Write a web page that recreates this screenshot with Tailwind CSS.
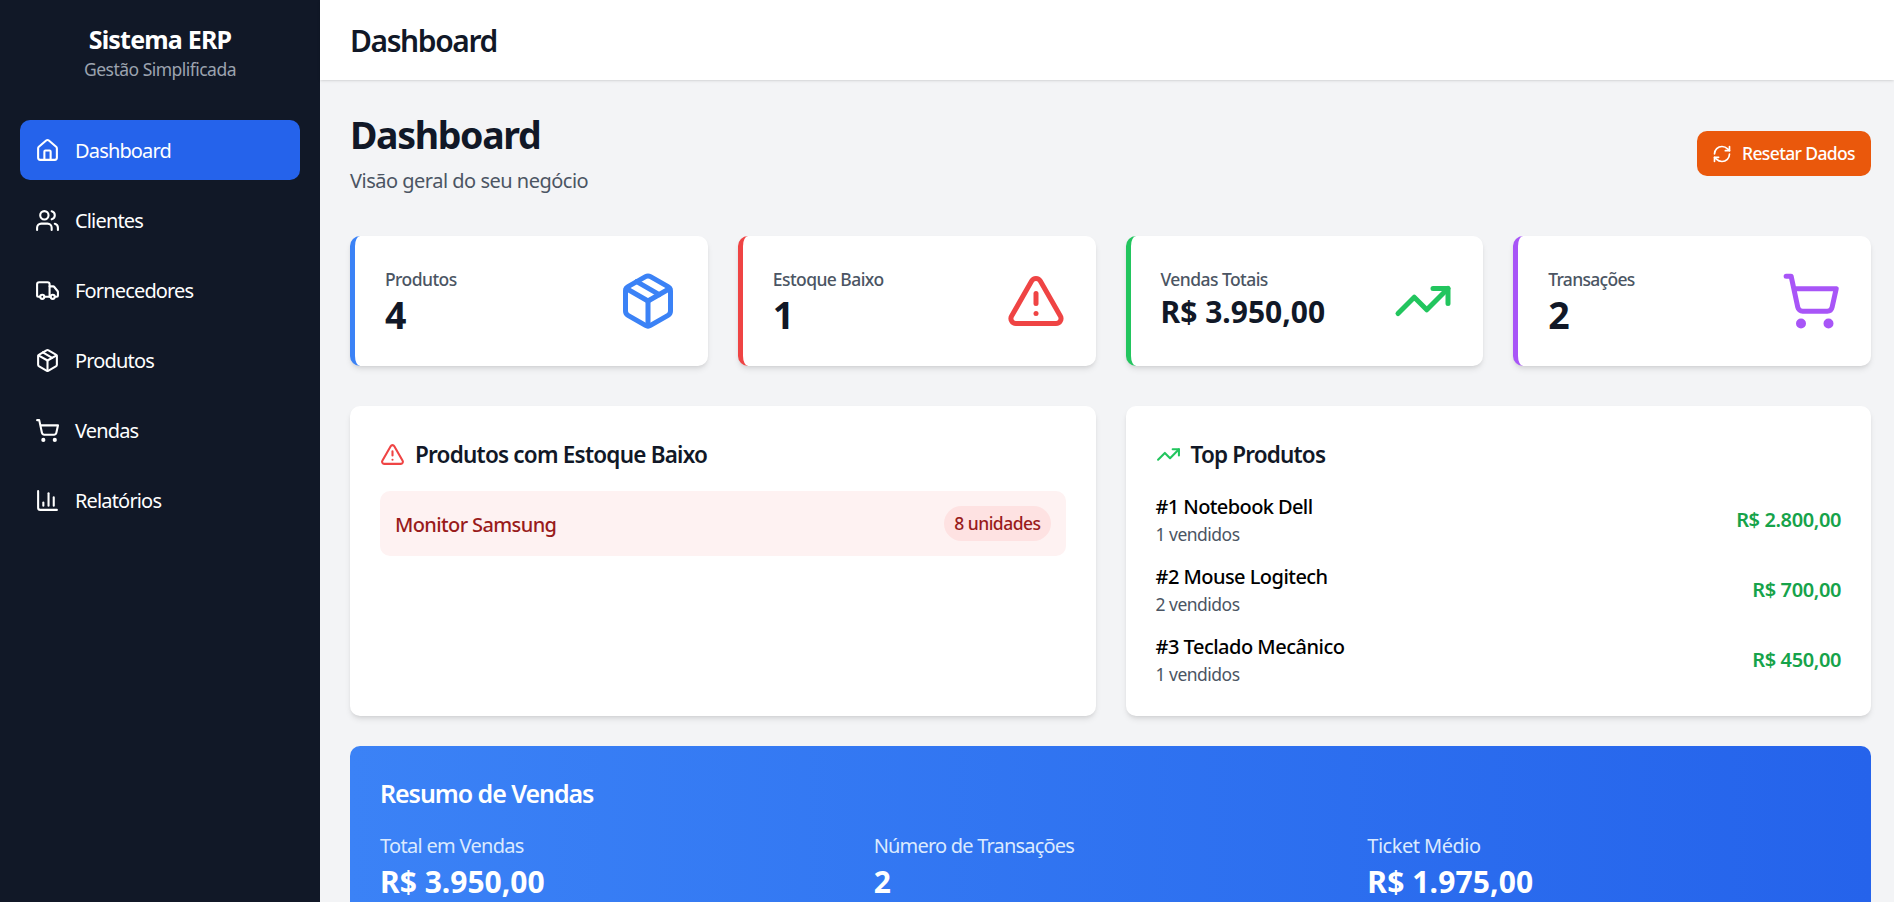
<!DOCTYPE html>
<html lang="pt-BR">
  <head>
    <meta charset="UTF-8" />
    <title>Sistema ERP</title>
    <script src="https://cdn.jsdelivr.net/npm/@tailwindcss/browser@4"></script>
  </head>
  <body class="h-screen overflow-hidden bg-[#f3f4f6] font-['Noto_Sans',sans-serif]">
    <div class="flex h-full">
      <!-- Sidebar -->
      <aside class="w-[320px] shrink-0 bg-[#111827] text-white">
        <div class="pt-[22px] text-center">
          <h1 class="text-[25px] leading-[35px] font-bold tracking-[-0.032em]">Sistema ERP</h1>
          <p class="text-[17.5px] leading-[25px] tracking-[-0.03em] text-[#9ca3af]">Gestão Simplificada</p>
        </div>
        <nav class="mt-[38px] flex flex-col gap-[10px] px-5 text-[20px] leading-[30px] tracking-[-0.042em]">
          <a class="flex h-[60px] items-center gap-[15px] rounded-[10px] bg-[#2563eb] px-[15px]">
            <svg class="h-[25px] w-[25px]" viewBox="0 0 24 24" fill="none" stroke="currentColor" stroke-width="2" stroke-linecap="round" stroke-linejoin="round"><path d="M15 21v-8a1 1 0 0 0-1-1h-4a1 1 0 0 0-1 1v8" /><path d="M3 10a2 2 0 0 1 .709-1.528l7-5.999a2 2 0 0 1 2.582 0l7 5.999A2 2 0 0 1 21 10v9a2 2 0 0 1-2 2H5a2 2 0 0 1-2-2z" /></svg>
            <span class="pt-[2px]">Dashboard</span>
          </a>
          <a class="flex h-[60px] items-center gap-[15px] rounded-[10px] px-[15px]">
            <svg class="h-[25px] w-[25px]" viewBox="0 0 24 24" fill="none" stroke="currentColor" stroke-width="2" stroke-linecap="round" stroke-linejoin="round"><path d="M16 21v-2a4 4 0 0 0-4-4H6a4 4 0 0 0-4 4v2" /><circle cx="9" cy="7" r="4" /><path d="M22 21v-2a4 4 0 0 0-3-3.87" /><path d="M16 3.13a4 4 0 0 1 0 7.75" /></svg>
            <span class="pt-[2px]">Clientes</span>
          </a>
          <a class="flex h-[60px] items-center gap-[15px] rounded-[10px] px-[15px]">
            <svg class="h-[25px] w-[25px]" viewBox="0 0 24 24" fill="none" stroke="currentColor" stroke-width="2" stroke-linecap="round" stroke-linejoin="round"><path d="M14 18V6a2 2 0 0 0-2-2H4a2 2 0 0 0-2 2v11a1 1 0 0 0 1 1h2" /><path d="M15 18H9" /><path d="M19 18h2a1 1 0 0 0 1-1v-3.65a1 1 0 0 0-.22-.624l-3.48-4.35A1 1 0 0 0 17.52 8H14" /><circle cx="17" cy="18" r="2" /><circle cx="7" cy="18" r="2" /></svg>
            <span class="pt-[2px]">Fornecedores</span>
          </a>
          <a class="flex h-[60px] items-center gap-[15px] rounded-[10px] px-[15px]">
            <svg class="h-[25px] w-[25px]" viewBox="0 0 24 24" fill="none" stroke="currentColor" stroke-width="2" stroke-linecap="round" stroke-linejoin="round"><path d="M11 21.73a2 2 0 0 0 2 0l7-4A2 2 0 0 0 21 16V8a2 2 0 0 0-1-1.73l-7-4a2 2 0 0 0-2 0l-7 4A2 2 0 0 0 3 8v8a2 2 0 0 0 1 1.73z" /><path d="M12 22V12" /><path d="M3.3 7 12 12l8.7-5" /><path d="m7.5 4.27 9 5.15" /></svg>
            <span class="pt-[2px]">Produtos</span>
          </a>
          <a class="flex h-[60px] items-center gap-[15px] rounded-[10px] px-[15px]">
            <svg class="h-[25px] w-[25px]" viewBox="0 0 24 24" fill="none" stroke="currentColor" stroke-width="2" stroke-linecap="round" stroke-linejoin="round"><circle cx="8" cy="21" r="1" /><circle cx="19" cy="21" r="1" /><path d="M2.05 2.05h2l2.66 12.42a2 2 0 0 0 2 1.58h9.78a2 2 0 0 0 1.95-1.57l1.65-7.43H5.12" /></svg>
            <span class="pt-[2px]">Vendas</span>
          </a>
          <a class="flex h-[60px] items-center gap-[15px] rounded-[10px] px-[15px]">
            <svg class="h-[25px] w-[25px]" viewBox="0 0 24 24" fill="none" stroke="currentColor" stroke-width="2" stroke-linecap="round" stroke-linejoin="round"><path d="M3 3v16a2 2 0 0 0 2 2h16" /><path d="M18 17V9" /><path d="M13 17V5" /><path d="M8 17v-3" /></svg>
            <span class="pt-[2px]">Relatórios</span>
          </a>
        </nav>
      </aside>

      <div class="flex min-w-0 flex-1 flex-col">
        <!-- Header -->
        <header class="h-[80px] shrink-0 bg-white px-[30px] shadow-sm">
          <h2 class="text-[30px] leading-[82px] font-semibold tracking-[-0.047em] text-[#111827]">Dashboard</h2>
        </header>

        <!-- Content -->
        <main class="flex-1 overflow-hidden pt-[31px] pr-[23px] pl-[30px]">
          <div class="mb-[40px] flex items-center justify-between">
            <div>
              <h1 class="text-[37.5px] leading-[47px] font-bold tracking-[-0.036em] text-[#111827]">Dashboard</h1>
              <p class="mt-[8px] text-[20px] leading-[30px] tracking-[-0.025em] text-[#4b5563]">Visão geral do seu negócio</p>
            </div>
            <button class="flex h-[45px] items-center gap-[10px] rounded-[10px] bg-[#ea580c] pr-[16px] pl-[15px] text-[17.5px] font-medium tracking-[-0.036em] text-white">
              <svg class="h-[20px] w-[20px]" viewBox="0 0 24 24" fill="none" stroke="currentColor" stroke-width="2" stroke-linecap="round" stroke-linejoin="round"><path d="M3 12a9 9 0 0 1 9-9 9.75 9.75 0 0 1 6.74 2.74L21 8" /><path d="M21 3v5h-5" /><path d="M21 12a9 9 0 0 1-9 9 9.75 9.75 0 0 1-6.74-2.74L3 16" /><path d="M8 16H3v5" /></svg>
              Resetar Dados
            </button>
          </div>

          <!-- Stat cards -->
          <div class="mb-[40px] grid grid-cols-4 gap-[30px]">
            <div class="flex h-[130px] justify-between rounded-[10px] border-l-[5px] border-[#3b82f6] bg-white px-[30px] pt-[31px] pb-[31px] shadow-md">
              <div>
                <p class="text-[17.5px] leading-[25px] font-medium tracking-[-0.032em] text-[#4b5563]">Produtos</p>
                <p class="text-[37.5px] leading-[45px] font-bold text-[#111827]">4</p>
              </div>
              <svg class="h-[60px] w-[60px] self-center text-[#3b82f6]" viewBox="0 0 24 24" fill="none" stroke="currentColor" stroke-width="2" stroke-linecap="round" stroke-linejoin="round"><path d="M11 21.73a2 2 0 0 0 2 0l7-4A2 2 0 0 0 21 16V8a2 2 0 0 0-1-1.73l-7-4a2 2 0 0 0-2 0l-7 4A2 2 0 0 0 3 8v8a2 2 0 0 0 1 1.73z" /><path d="M12 22V12" /><path d="M3.3 7 12 12l8.7-5" /><path d="m7.5 4.27 9 5.15" /></svg>
            </div>
            <div class="flex h-[130px] justify-between rounded-[10px] border-l-[5px] border-[#ef4444] bg-white px-[30px] pt-[31px] pb-[31px] shadow-md">
              <div>
                <p class="text-[17.5px] leading-[25px] font-medium tracking-[-0.032em] text-[#4b5563]">Estoque Baixo</p>
                <p class="text-[37.5px] leading-[45px] font-bold text-[#111827]">1</p>
              </div>
              <svg class="h-[60px] w-[60px] self-center text-[#ef4444]" viewBox="0 0 24 24" fill="none" stroke="currentColor" stroke-width="2" stroke-linecap="round" stroke-linejoin="round"><path d="m21.73 18-8-14a2 2 0 0 0-3.48 0l-8 14A2 2 0 0 0 4 21h16a2 2 0 0 0 1.73-3" /><path d="M12 9v4" /><path d="M12 17h.01" /></svg>
            </div>
            <div class="flex h-[130px] justify-between rounded-[10px] border-l-[5px] border-[#22c55e] bg-white px-[30px] pt-[31px] pb-[31px] shadow-md">
              <div>
                <p class="text-[17.5px] leading-[25px] font-medium tracking-[-0.032em] text-[#4b5563]">Vendas Totais</p>
                <p class="text-[30px] leading-[40px] font-bold text-[#111827]">R$ 3.950,00</p>
              </div>
              <svg class="h-[60px] w-[60px] self-center text-[#22c55e]" viewBox="0 0 24 24" fill="none" stroke="currentColor" stroke-width="2" stroke-linecap="round" stroke-linejoin="round"><polyline points="22 7 13.5 15.5 8.5 10.5 2 17" /><polyline points="16 7 22 7 22 13" /></svg>
            </div>
            <div class="flex h-[130px] justify-between rounded-[10px] border-l-[5px] border-[#a855f7] bg-white px-[30px] pt-[31px] pb-[31px] shadow-md">
              <div>
                <p class="text-[17.5px] leading-[25px] font-medium tracking-[-0.04em] text-[#4b5563]">Transações</p>
                <p class="text-[37.5px] leading-[45px] font-bold text-[#111827]">2</p>
              </div>
              <svg class="h-[60px] w-[60px] self-center text-[#a855f7]" viewBox="0 0 24 24" fill="none" stroke="currentColor" stroke-width="2" stroke-linecap="round" stroke-linejoin="round"><circle cx="8" cy="21" r="1" /><circle cx="19" cy="21" r="1" /><path d="M2.05 2.05h2l2.66 12.42a2 2 0 0 0 2 1.58h9.78a2 2 0 0 0 1.95-1.57l1.65-7.43H5.12" /></svg>
            </div>
          </div>

          <!-- Panels -->
          <div class="mb-[30px] grid grid-cols-2 gap-[30px]">
            <div class="h-[310px] rounded-[10px] bg-white px-[30px] pt-[31px] shadow-md">
              <h3 class="mb-[19px] flex items-center gap-[10px] text-[22.5px] leading-[35px] font-semibold tracking-[-0.035em] text-[#111827]">
                <svg class="h-[25px] w-[25px] text-[#ef4444]" viewBox="0 0 24 24" fill="none" stroke="currentColor" stroke-width="2" stroke-linecap="round" stroke-linejoin="round"><path d="m21.73 18-8-14a2 2 0 0 0-3.48 0l-8 14A2 2 0 0 0 4 21h16a2 2 0 0 0 1.73-3" /><path d="M12 9v4" /><path d="M12 17h.01" /></svg>
                Produtos com Estoque Baixo
              </h3>
              <div class="flex items-center justify-between rounded-[10px] bg-[#fef2f2] p-[15px]">
                <span class="pt-[2px] text-[20px] leading-[30px] font-medium tracking-[-0.031em] text-[#991b1b]">Monitor Samsung</span>
                <span class="rounded-full bg-[#fee2e2] px-[10px] py-[5px] text-[17.5px] leading-[25px] font-medium tracking-[-0.03em] text-[#991b1b]">8 unidades</span>
              </div>
            </div>
            <div class="h-[310px] rounded-[10px] bg-white px-[30px] pt-[31px] shadow-md">
              <h3 class="mb-[20px] flex items-center gap-[10px] text-[22.5px] leading-[35px] font-semibold tracking-[-0.037em] text-[#111827]">
                <svg class="h-[25px] w-[25px] text-[#22c55e]" viewBox="0 0 24 24" fill="none" stroke="currentColor" stroke-width="2" stroke-linecap="round" stroke-linejoin="round"><polyline points="22 7 13.5 15.5 8.5 10.5 2 17" /><polyline points="16 7 22 7 22 13" /></svg>
                Top Produtos
              </h3>
              <div class="flex flex-col gap-[15px]">
                <div class="flex items-center justify-between">
                  <div>
                    <p class="text-[20px] leading-[30px] font-medium tracking-[-0.03em] text-black">#1 Notebook Dell</p>
                    <p class="text-[17.5px] leading-[25px] tracking-[-0.029em] text-[#4b5563]">1 vendidos</p>
                  </div>
                  <span class="text-[20px] leading-[30px] font-semibold tracking-[-0.02em] text-[#16a34a]">R$ 2.800,00</span>
                </div>
                <div class="flex items-center justify-between">
                  <div>
                    <p class="text-[20px] leading-[30px] font-medium tracking-[-0.027em] text-black">#2 Mouse Logitech</p>
                    <p class="text-[17.5px] leading-[25px] tracking-[-0.029em] text-[#4b5563]">2 vendidos</p>
                  </div>
                  <span class="text-[20px] leading-[30px] font-semibold tracking-[-0.02em] text-[#16a34a]">R$ 700,00</span>
                </div>
                <div class="flex items-center justify-between">
                  <div>
                    <p class="text-[20px] leading-[30px] font-medium tracking-[-0.025em] text-black">#3 Teclado Mecânico</p>
                    <p class="text-[17.5px] leading-[25px] tracking-[-0.029em] text-[#4b5563]">1 vendidos</p>
                  </div>
                  <span class="text-[20px] leading-[30px] font-semibold tracking-[-0.02em] text-[#16a34a]">R$ 450,00</span>
                </div>
              </div>
            </div>
          </div>

          <!-- Sales summary -->
          <div class="rounded-[10px] bg-linear-to-r from-[#3b82f6] to-[#2563eb] p-[30px] text-white">
            <h3 class="mb-[20px] text-[25px] leading-[35px] font-semibold tracking-[-0.042em]">Resumo de Vendas</h3>
            <div class="grid grid-cols-3 gap-[20px]">
              <div>
                <p class="text-[20px] leading-[30px] tracking-[-0.035em] text-[#dbeafe]">Total em Vendas</p>
                <p class="mt-px text-[30px] leading-[40px] font-bold">R$ 3.950,00</p>
              </div>
              <div>
                <p class="text-[20px] leading-[30px] tracking-[-0.04em] text-[#dbeafe]">Número de Transações</p>
                <p class="mt-px text-[30px] leading-[40px] font-bold">2</p>
              </div>
              <div>
                <p class="text-[20px] leading-[30px] tracking-[-0.025em] text-[#dbeafe]">Ticket Médio</p>
                <p class="mt-px text-[30px] leading-[40px] font-bold tracking-[0.004em]">R$ 1.975,00</p>
              </div>
            </div>
          </div>
        </main>
      </div>
    </div>
  </body>
</html>
